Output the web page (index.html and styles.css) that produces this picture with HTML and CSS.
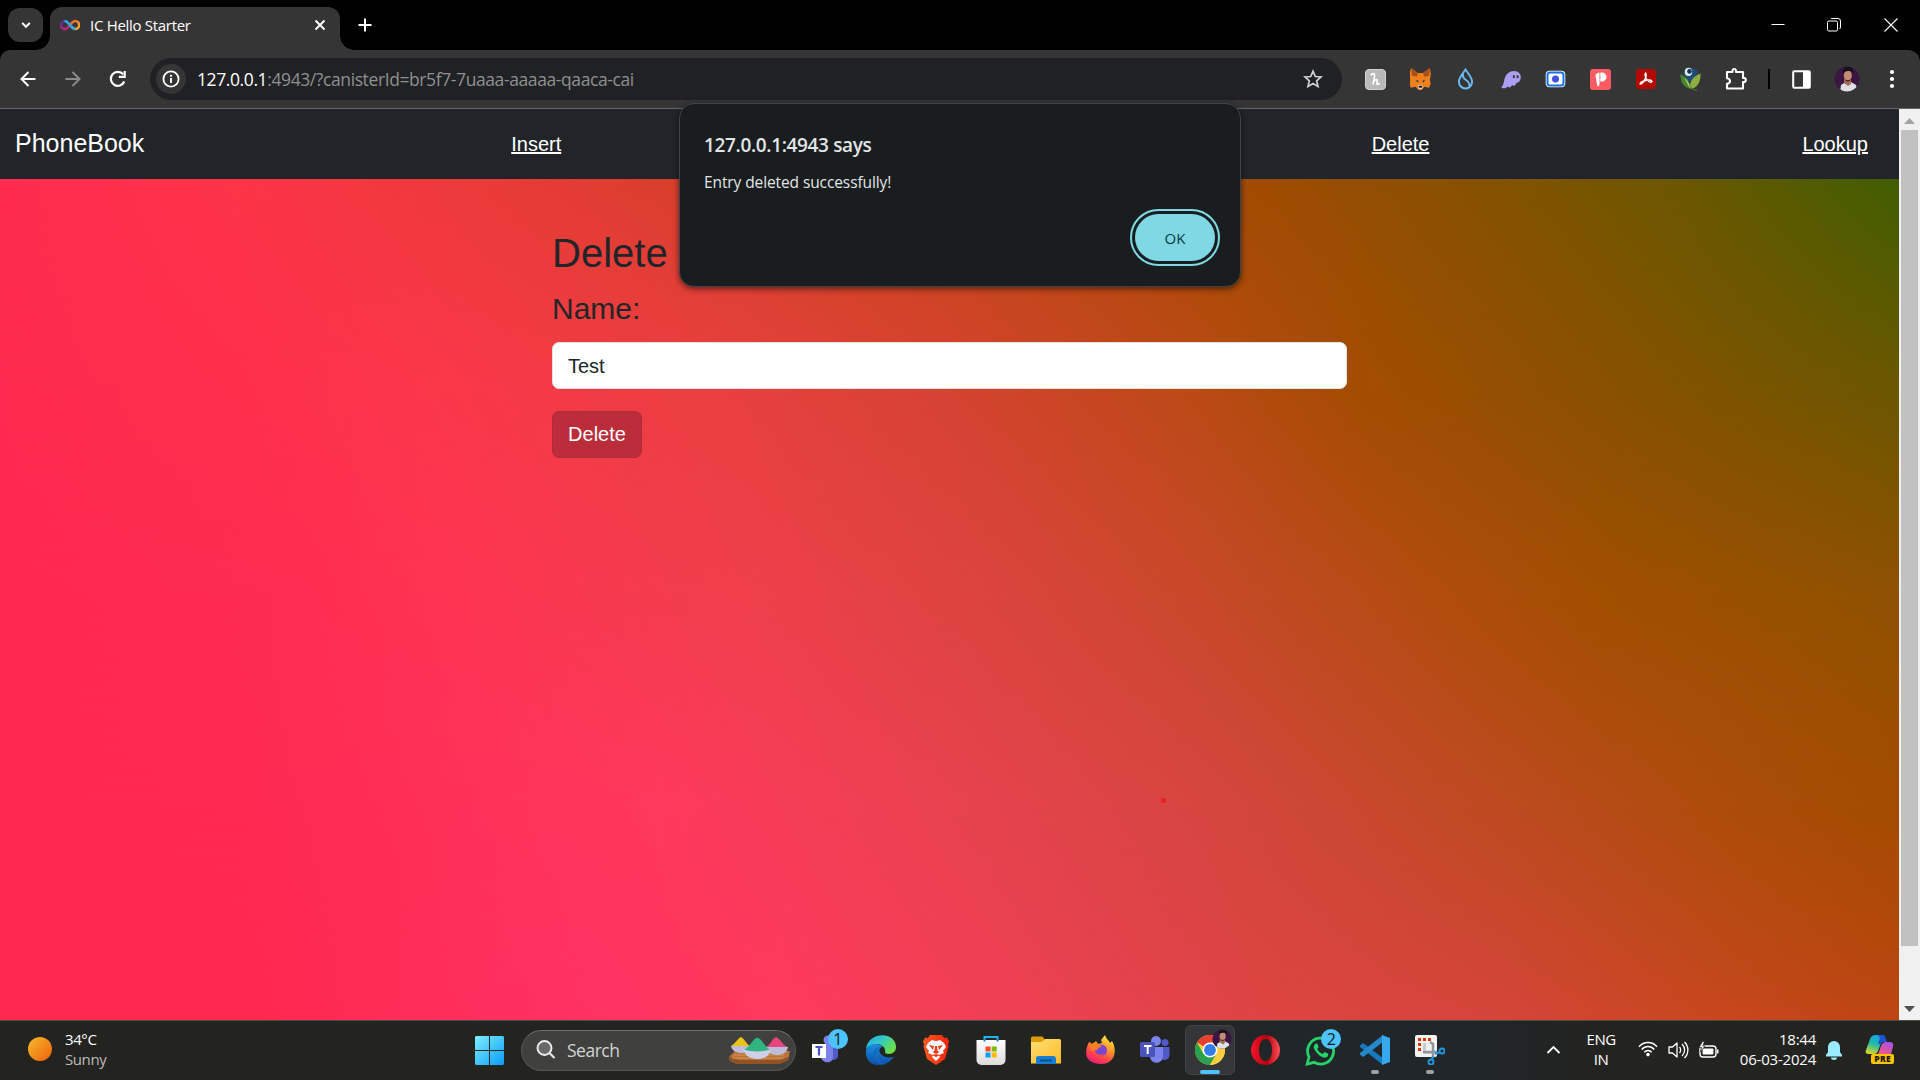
FILE: index.html
```html
<!DOCTYPE html>
<html lang="en">
<head>
<meta charset="utf-8">
<title>IC Hello Starter</title>
<link rel="stylesheet" href="styles.css">
</head>
<body>
<svg class="defs" width="0" height="0" aria-hidden="true">
  <defs>
    <linearGradient id="gWin" x1="0" y1="0" x2="1" y2="1"><stop offset="0" stop-color="#7defff"/><stop offset="1" stop-color="#0a9bf8"/></linearGradient>
    <linearGradient id="gSun" x1="0" y1="0" x2="1" y2="1"><stop offset="0" stop-color="#f5bb2c"/><stop offset="1" stop-color="#f0600c"/></linearGradient>
    <linearGradient id="gInfL" x1="0" y1="0" x2="1" y2="1"><stop offset="0" stop-color="#522785"/><stop offset=".35" stop-color="#8a2a90"/><stop offset="1" stop-color="#ed1e79"/></linearGradient>
    <linearGradient id="gInfR" x1="0" y1="0" x2="1" y2="1"><stop offset="0" stop-color="#f15a24"/><stop offset="1" stop-color="#fbb03b"/></linearGradient>
    <linearGradient id="gEdgeA" x1="0" y1="0" x2="1" y2=".5"><stop offset="0" stop-color="#2aa9e8"/><stop offset=".5" stop-color="#2fc7c8"/><stop offset="1" stop-color="#6be04e"/></linearGradient>
    <linearGradient id="gEdgeB" x1="0" y1="0" x2="0" y2="1"><stop offset="0" stop-color="#1a8fe0"/><stop offset="1" stop-color="#0a4fa8"/></linearGradient>
    <linearGradient id="gBrave" x1="0" y1="0" x2="1" y2="0"><stop offset="0" stop-color="#ff5a22"/><stop offset="1" stop-color="#f3230c"/></linearGradient>
    <linearGradient id="gFolder" x1="0" y1="0" x2="1" y2="1"><stop offset="0" stop-color="#ffdf70"/><stop offset="1" stop-color="#fdbb2a"/></linearGradient>
    <linearGradient id="gFox" x1=".8" y1="0" x2=".3" y2="1"><stop offset="0" stop-color="#fff04a"/><stop offset=".4" stop-color="#ff9a27"/><stop offset=".75" stop-color="#ff3f4c"/><stop offset="1" stop-color="#e81c76"/></linearGradient>
    <linearGradient id="gOpera" x1="0" y1="0" x2="1" y2="0"><stop offset="0" stop-color="#f5142a"/><stop offset=".55" stop-color="#b8000f"/><stop offset="1" stop-color="#ff5058"/></linearGradient>
    <linearGradient id="gCopA" x1=".6" y1="0" x2=".3" y2="1"><stop offset="0" stop-color="#1aa0e8"/><stop offset=".45" stop-color="#1bb9a8"/><stop offset="1" stop-color="#d8d62c"/></linearGradient>
    <linearGradient id="gCopB" x1=".8" y1="0" x2=".2" y2="1"><stop offset="0" stop-color="#a450e8"/><stop offset="1" stop-color="#ff5a78"/></linearGradient>
    <linearGradient id="gBag" x1="0" y1="0" x2="0" y2="1"><stop offset="0" stop-color="#ffffff"/><stop offset="1" stop-color="#dcdcdc"/></linearGradient>
    <clipPath id="cAvatar"><circle cx="13" cy="13" r="12.5"/></clipPath>
    <symbol id="avatar" viewBox="0 0 26 26">
      <g clip-path="url(#cAvatar)"><rect width="26" height="26" fill="#3b1544"/><path d="M6 26 7 19 11 16.500 17 16 22 19 24 26Z" fill="#dde0e4"/><path d="M10 13h7v5l-3 2-4-3Z" fill="#a56c55"/><ellipse cx="13.800" cy="9.500" rx="4" ry="5.500" fill="#c58c72"/><path d="M9 8C8 2 12 .5 15 1c4 0 5 4 4 7-1-3-3-3-5-3S10 6 9 8Z" fill="#15111a"/><path d="M10.300 12c1 3 6 3 7 0-.5 4-6 5-7 0Z" fill="#33201d"/></g>
    </symbol>
  </defs>
</svg>

<div class="screen">
  <header class="tabstrip">
    <button class="tab-search"><svg width="12" height="12" viewBox="0 0 12 12"><path d="M2.200 4 6 7.800 9.800 4" fill="none" stroke="#fff" stroke-width="2"/></svg></button>
    <div class="tab">
      <svg width="20" height="12" viewBox="0 0 20 12" fill="none" stroke-width="2.500"><path d="M10 6C8 3.600 6.800 2 4.900 2a4 4 0 0 0 0 8C6.800 10 8 8.400 10 6" stroke="url(#gInfL)"/><path d="M10 6c2-2.400 3.200-4 5.100-4a4 4 0 0 1 0 8C13.200 10 12 8.400 10 6Z" stroke="url(#gInfR)"/><path d="M4.500 2C6.800 2 8 3.600 10 6s3.200 4 5.500 4" stroke="#29abe2"/></svg>
      <span class="tab-title">IC Hello Starter</span>
      <svg class="tab-close" width="12" height="12" viewBox="0 0 12 12"><path d="m1.500 1.500 9 9m0-9-9 9" stroke="#fff" stroke-width="1.900"/></svg>
    </div>
    <svg class="new-tab" width="14" height="14" viewBox="0 0 14 14"><path d="M7 .5v13M.5 7h13" stroke="#fff" stroke-width="2"/></svg>
    <div class="window-controls">
      <span><svg width="14" height="14" viewBox="0 0 14 14"><path d="M.5 6.500h13" stroke="#fff"/></svg></span>
      <span><svg width="14" height="14" viewBox="0 0 14 14"><rect x=".5" y="3" width="10" height="10" rx="1.500" fill="none" stroke="#fff"/><path d="M3.500 1C4 .5 4 .5 5 .5h6A2.500 2.500 0 0 1 13.500 3v6c0 1-.5 1.500-1 2" fill="none" stroke="#fff"/></svg></span>
      <span><svg width="14" height="14" viewBox="0 0 14 14"><path d="m.5.5 13 13m0-13-13 13" stroke="#fff" stroke-width="1.100"/></svg></span>
    </div>
  </header>

  <div class="toolbar">
    <div class="nav-buttons">
      <span><svg width="16" height="16" viewBox="0 0 16 16"><path d="M15.500 8H2m6.500-7L1.500 8l7 7" fill="none" stroke="#fff" stroke-width="2"/></svg></span>
      <span><svg width="16" height="16" viewBox="0 0 16 16"><path d="M.5 8H14M7.500 1l7 7-7 7" fill="none" stroke="#8a8a8a" stroke-width="2"/></svg></span>
      <span><svg width="18" height="18" viewBox="0 0 18 18"><path d="M15.300 11.500A7 7 0 1 1 14.200 4.300" fill="none" stroke="#fff" stroke-width="2.200"/><path d="M16.800 1v7h-7V5.800h4.800V1Z" fill="#fff"/></svg></span>
    </div>
    <div class="omnibox">
      <span class="site-info"><svg width="18" height="18" viewBox="0 0 18 18"><circle cx="9" cy="9" r="7.600" fill="none" stroke="#fff" stroke-width="1.800"/><path d="M9 8v5M9 4.700v2" stroke="#fff" stroke-width="1.900"/></svg></span>
      <span class="url"><b>127.0.0.1</b>:4943/?canisterId=br5f7-7uaaa-aaaaa-qaaca-cai</span>
      <svg width="20" height="20" viewBox="0 0 20 20"><path d="m10 2.200 2.300 5.300 5.700.5-4.300 3.800 1.300 5.600-5-3-5 3 1.300-5.600L2 8l5.700-.5Z" fill="none" stroke="#d0d0d0" stroke-width="1.700"/></svg>
    </div>
    <div class="extensions">
      <span><svg width="21" height="25" viewBox="0 0 21 25"><rect x=".5" y=".5" width="20" height="20" rx="3.500" transform="translate(0 2)" fill="#b9b9b9" stroke="#d2d2d2"/><path d="M6 8.500c0-1.500 2.500-2.500 3.300-1.500.8 1.300-.6 6.500-1.300 10.500m.2-2c1.600-3.500 4.300-4 4-1.200-.3 2-.7 3.200.5 3.200.8 0 1.500-.8 1.800-1.500" fill="none" stroke="#fff" stroke-width="1.700"/></svg></span>
      <span><svg width="21" height="22" viewBox="0 0 22 20" preserveAspectRatio="none"><path d="M1 0 8.500 4.500h5L21 0l.8 6-1 5 .8 3-1.500 4-5-1-3 3h-3.200l-3-3-5 1-1.500-4 .8-3-1-5Z" fill="#f0801c"/><path d="m1 0 7.500 4.500L7 8l-5-1Zm20 0-7.500 4.500L15 8l5-1Z" fill="#a9501c"/><path d="m6 11 3 .5-.8 1.800Zm10 0-3 .5.800 1.800Z" fill="#2a3340"/><path d="m8.500 16 2.500-1 2.500 1-.7 3H9.200Z" fill="#d9cabd"/><path d="m9 16.500 2-.7 2 .7-.8 1.500H9.800Z" fill="#1b1b1b"/></svg></span>
      <span><svg width="17" height="24" viewBox="0 0 18 24"><path d="M9 2C6 6.500 2 10.500 2 15a7 7 0 0 0 14 0C16 10.500 12 6.500 9 2Z" fill="none" stroke="#6fbcf0" stroke-width="2"/><path d="M6.500 6.500C4 14 15 12 13 20" fill="none" stroke="#6fbcf0" stroke-width="2"/></svg></span>
      <span><svg width="22" height="19" viewBox="0 0 22 20"><path d="M.8 17.500C3 17 3 14 4 10 5.500 4 9.500 1 14 1c5 0 8 3.500 7.200 8-.6 3-3 5-4.700 4.600-.8 3.400-3.500 3.800-4.200 1.900-1.500 3.500-4 3.500-4.400 1.500C6 19.500 1.300 20 .8 17.500Z" fill="#ab9ff2"/><ellipse cx="14" cy="7" rx="1.100" ry="1.700" fill="#333"/><ellipse cx="18" cy="7" rx="1.100" ry="1.700" fill="#333"/></svg></span>
      <span><svg width="21" height="18" viewBox="0 0 21 18"><rect x=".7" y=".7" width="19.600" height="16.600" rx="4" fill="#fff"/><rect x="2.500" y="2.500" width="16" height="13" rx="2.500" fill="#fff" stroke="#1672e8" stroke-width="2"/><circle cx="10.500" cy="9" r="3.500" fill="#4350df"/></svg></span>
      <span><svg width="21" height="21" viewBox="0 0 21 21"><rect width="21" height="21" rx="3" fill="#ff5a63"/><path d="M5.500 7Q5.500 4 9.500 3.500V15Q9.500 17 7.500 17.500Z" fill="#fff"/><path d="M10.300 3.500h1.700a4.500 4.500 0 0 1 0 9H10.300Z" fill="#fff"/></svg></span>
      <span><svg width="20" height="20" viewBox="0 0 20 20"><rect width="20" height="20" rx="3.500" fill="#b30b00"/><path d="M9.500 4c1.500 1 .5 5-1.500 8s-4.500 4-3.800 2.300C5 12.500 10 11 13 11s3.800 1.800 2 2.200C12 13.500 8 7.500 9.500 4Z" fill="none" stroke="#fff" stroke-width="1.400"/></svg></span>
      <span><svg width="21" height="24" viewBox="0 0 21 22" preserveAspectRatio="none"><path d="M3 5C5-.5 15-1 18 5l-6 8H8Z" fill="#1f4d73"/><circle cx="8.500" cy="4.500" r="3.700" fill="#dceaf0"/><circle cx="9.500" cy="4" r="2.300" fill="#163650"/><path d="M10 20c-1-7 4-12 10.500-14 .5 7-3 14-10.500 14Z" fill="#8ead3f"/><path d="M11 20C4 19 .5 15 .5 6.500 6 9 10 13 11 20Z" fill="#49862e"/><path d="M10.500 20c-2-3-4-6-6-10 3 2 5 5 6 10Z" fill="#c2c970"/><path d="M11 19c2 2 4 2.500 6 2" fill="none" stroke="#42752d"/></svg></span>
      <span><svg width="24" height="24" viewBox="0 0 24 24"><path d="M3 5h5.500c-.8-4 4.300-4 3.500 0h7v6c3.800-.8 3.800 4.800 0 4v6.500H3v-4.700c4-.6 4-5 0-5.600Z" fill="none" stroke="#fff" stroke-width="2.100" stroke-linejoin="round"/></svg></span>
    </div>
    <i class="toolbar-divider"></i>
    <div class="profile-area">
      <span><svg width="19" height="19" viewBox="0 0 19 19"><rect x="1.200" y="1.200" width="16.600" height="16.600" rx="1" fill="none" stroke="#fff" stroke-width="2"/><path d="M11 1h7v17h-7Z" fill="#fff"/></svg></span>
      <span><svg width="26" height="26"><use href="#avatar"/></svg></span>
      <span><svg width="6" height="20" viewBox="0 0 6 20"><circle cx="3" cy="3" r="2.100" fill="#fff"/><circle cx="3" cy="10" r="2.100" fill="#fff"/><circle cx="3" cy="17" r="2.100" fill="#fff"/></svg></span>
    </div>
  </div>

  <main class="viewport">
    <div class="page">
      <div class="backdrop"><i class="band band-1"></i><i class="band band-2"></i><i class="band band-3"></i><i class="band band-4"></i><i class="band band-5"></i></div>
      <nav class="navbar">
        <a class="brand">PhoneBook</a>
        <a class="link">Insert</a>
        <a class="link">Update</a>
        <a class="link">Delete</a>
        <a class="link">Lookup</a>
      </nav>
      <form class="form">
        <h1>Delete</h1>
        <label>Name:</label>
        <div class="field">Test</div>
        <button type="button" class="submit">Delete</button>
      </form>
      <i class="pointer-dot"></i>
    </div>
    <aside class="scrollbar">
      <svg width="11" height="6" viewBox="0 0 11 6"><path d="M0 6h11L5.500 0Z" fill="#a3a3a3"/></svg>
      <i class="thumb"></i>
      <svg width="11" height="6" viewBox="0 0 11 6"><path d="M0 0h11L5.500 6Z" fill="#505050"/></svg>
    </aside>
  </main>

  <footer class="taskbar">
    <div class="weather">
      <svg width="24" height="24" viewBox="0 0 24 24"><circle cx="12" cy="12" r="12" fill="url(#gSun)"/></svg>
      <p><span>34°C</span><br><span class="muted">Sunny</span></p>
    </div>
    <div class="apps-start"><svg width="29" height="29" viewBox="0 0 29 29"><path d="M1 0h13v14H0V1Zm14 0h13l1 1v13H15ZM0 15h14v14H1l-1-1Zm15 0h14v13l-1 1H15Z" fill="url(#gWin)"/></svg></div>
    <div class="search">
      <svg width="20" height="20" viewBox="0 0 20 20"><circle cx="8.500" cy="8" r="7" fill="#68696a" stroke="#eee" stroke-width="1.900"/><path d="m13.500 13 5 5" stroke="#e4e4e4" stroke-width="2.200"/></svg>
      <span>Search</span>
      <svg class="bowls" width="63" height="29" viewBox="0 0 63 29"><path d="m7 15-6 6 1 4 7 3h42l9-4 2-9Z" fill="#b8743c"/><path d="m1 20 1 5 7 3h42l9-4 1-3-10 3H10Z" fill="#915225"/><path d="M6 19h50M4 22h52" stroke="#d5944f"/><path d="M3 10C8 7 10 2 13 1c4 2 5 7 9 9Z" fill="#e9c319"/><path d="M3 10h19c0 5-5 7-9 7S4 15 3 10Z" fill="#bdbdda"/><path d="M38 11c5-2 6-9 10-10 5 2 6 8 12 10Z" fill="#e8447e"/><path d="M38 11h22c-1 6-6 8-11 8s-11-3-11-8Z" fill="#bdbddb"/><path d="M15 13h28c-1 7-7 10-14 10s-13-4-14-10Z" fill="#cfcfe8"/><path d="M16 13.500c6-2 8-10 13-12 6 2 8 10 13 12-6 2.500-20 2.500-26 0Z" fill="#30b581"/></svg>
    </div>
    <div class="apps">
      <span class="app"><svg width="30" height="30" viewBox="0 0 30 30"><path d="M17 8h10v13a5 5 0 0 1-8 3Z" fill="#505ac9"/><circle cx="17" cy="5" r="4.500" fill="#7b83eb"/><path d="M10 9h12v13c0 7-11 7-12 0Z" fill="#7b83eb"/><rect x="1" y="9" width="14" height="14" fill="#fff"/><path d="M4.500 12h7M8 12v8.500" stroke="#4b53bc" stroke-width="2.200"/></svg><em class="badge">1</em></span>
      <span class="app"><svg width="30" height="30" viewBox="0 0 30 30"><path d="M0 14C2-4 30-4 30 12c0 7-7 8-11 6 2-9-11-13-19-4Z" fill="url(#gEdgeA)"/><path d="M0 15C2 8 13 7 17 12c-6-1-6 13 11 10C16 37-2 30 0 15Z" fill="url(#gEdgeB)"/><path d="M17 12c-9 0-9 16 3 17-10 2-17-11-9-16 2-1 4-1 6-1Z" fill="#1569bd"/></svg></span>
      <span class="app"><svg width="26" height="30" viewBox="0 0 26 30"><path d="M7 0h12l2 3 3-.5 2 4-1 3 .5 2L22 24l-9 6-9-6L.5 11.500l.500-2-1-3 2-4L5 3Z" fill="url(#gBrave)"/><path d="m9 5 4 1 4-1 4 3 2 4-3 4 1 2-5 2 1 2-4 4-4-4 1-2-5-2 1-2-3-4 2-4Z" fill="#fff"/><path d="m6 10 5 1-1 4Zm14 0-5 1 1 4ZM12 11h2l.5 5 2 1-3.500 2-3.500-2 2-1ZM9 20l4-1 4 1-4 2Z" fill="#f43d16"/></svg></span>
      <span class="app"><svg width="30" height="30" viewBox="0 0 30 30"><path d="M8.500 7V2h13v5" fill="none" stroke="#1eb5ef" stroke-width="2"/><path d="M.5 5h29v20a5 5 0 0 1-5 5h-19a5 5 0 0 1-5-5Z" fill="url(#gBag)"/><path d="M8.500 6.500V4m13 2.500V4" stroke="#1687bd" stroke-width="2"/><path d="M9.500 11.500h5v5h-5Z" fill="#f25022"/><path d="M15.700 11.500h5v5h-5Z" fill="#7fba00"/><path d="M9.500 17.500h5v5h-5Z" fill="#00a4ef"/><path d="M15.700 17.500h5v5h-5Z" fill="#ffb900"/></svg></span>
      <span class="app"><svg width="30" height="28" viewBox="0 0 30 28"><path d="M0 2q0-1.500 1.500-1.500h10L14 4v5H0Z" fill="#df9c09"/><path d="M0 6h11l3-3h14.500Q30 3 30 4.500V27.500H0Z" fill="url(#gFolder)"/><path d="M5 28v-5q0-3 3-3h14q3 0 3 3v5Z" fill="#177dcc"/><path d="M9 24.500h12" stroke="#0a4c87" stroke-width="1.800"/></svg></span>
      <span class="app"><svg width="30" height="30" viewBox="0 0 30 30"><path d="M3 7c1 0 2 1 2.500 2L9 7l1-1 2 3 4-1-1-3 4-5c1 4 4 5 5 8l2-2c5 8 4 23-11 23S-3 19 3 7Z" fill="url(#gFox)"/><circle cx="15" cy="15.500" r="6" fill="#7846d4"/><path d="M4 10c4-3 9-2 12 2-3 0-4 1-5 3l-6 1Z" fill="#ff7c27"/><path d="M9 16c2 5 7 4 10 2-3 6-10 4-10-2Z" fill="#ff4b3a"/></svg></span>
      <span class="app"><svg width="30" height="30" viewBox="0 0 30 30"><circle cx="16" cy="6" r="5" fill="#7b83eb"/><circle cx="25" cy="7.500" r="3.500" fill="#5059c9"/><path d="M20 12h9.500v8a5 5 0 0 1-8 4Z" fill="#5059c9"/><path d="M10 12h13v9c0 9-13 9-13 0Z" fill="#7b83eb"/><rect y="7" width="15" height="15" rx="1.500" fill="#4b53bc"/><path d="M4 11h7.500M7.700 11v8" stroke="#fff" stroke-width="2"/></svg></span>
      <span class="app active"><svg width="30" height="30" viewBox="0 0 30 30"><circle cx="15" cy="15" r="15" fill="#ffcd40"/><path d="M15 15 2 7.500A15 15 0 0 1 28 7.500H15Z" fill="#e64234"/><path d="M2 7.500 8.500 19 15 22.500 15 30A15 15 0 0 1 2 7.500Z" fill="#2aa14d"/><path d="M8.500 19 15 15l6.500 3.800L15 30H13Z" fill="#2aa14d"/><path d="M28 7.500H15l6.500 11.300L15 30A15 15 0 0 0 28 7.500Z" fill="#ffcd40"/><circle cx="15" cy="15" r="7.500" fill="#fff"/><circle cx="15" cy="15" r="5.900" fill="#347de8"/></svg><svg class="app-avatar" width="20" height="20"><use href="#avatar"/></svg></span>
      <span class="app"><svg width="29" height="30" viewBox="0 0 29 30"><path d="M14.500 0a14.500 15 0 1 0 0 30 14.500 15 0 1 0 0-30Zm0 4c4 0 6.500 4.500 6.500 11s-2.500 11-6.500 11S8 21.500 8 15s2.500-11 6.500-11Z" fill="url(#gOpera)" fill-rule="evenodd"/></svg></span>
      <span class="app"><svg width="31" height="31" viewBox="0 0 31 31"><path d="M2.200 29 4 22A13 13 0 1 1 9 27.300Z" fill="none" stroke="#25d366" stroke-width="2.800"/><path d="M11 8.500c-2 1-3 3-1.500 6 2.500 4.500 5.500 7 9 8 3 .8 5.500-1.500 4.500-4l-3.500-1.600-1.700 2c-2.800-1-4.500-3-5.600-5l1.500-2-1.500-3.400Z" fill="#25d366"/></svg><em class="badge">2</em></span>
      <span class="app running"><svg width="30" height="30" viewBox="0 0 30 30"><path d="m0 10.500 3-2.500 20 15v7L0 12Z" fill="#1679bd"/><path d="M0 19.500 3 22 23 7V0L0 18Z" fill="#2489ca"/><path d="m22 0 8 3v24l-8 3Z" fill="#35a9ee"/></svg></span>
      <span class="app running"><svg width="31" height="30" viewBox="0 0 31 30"><rect x="1" width="22" height="22" rx="2" fill="#f3f3f3"/><path d="M4 3h3v3H4Zm5 0h3v3H9Zm5 0h3v3h-3ZM4 8h3v3H4Zm0 5h3v3H4Z" fill="#d83b01"/><path d="M9 8h3v8h7v3H9Z" fill="#c9cdd2"/><path d="m16 7 3 2v14M9 17h14" fill="none" stroke="#8e969e" stroke-width="2.500"/><circle cx="17" cy="27" r="2.500" fill="none" stroke="#2096dc" stroke-width="2"/><circle cx="28" cy="16" r="2.500" fill="none" stroke="#2096dc" stroke-width="2"/><path d="m18 25 1-4m2-2 5-2" stroke="#2096dc" stroke-width="2"/></svg></span>
    </div>
    <div class="tray">
      <svg class="tray-chevron" width="15" height="10" viewBox="0 0 15 10"><path d="m1.500 8 6-6 6 6" fill="none" stroke="#fff" stroke-width="1.800"/></svg>
      <p class="language">ENG<br>IN</p>
      <div class="status">
        <svg width="20" height="16" viewBox="0 0 20 16"><g fill="none" stroke="#fff" stroke-width="1.500"><path d="M1 5.700c5-5.500 13-5.500 18 0"/><path d="M3.700 8.500c3.500-4 9.100-4 12.600 0"/><path d="M6.300 11.300c2-2.400 5.400-2.400 7.400 0"/></g><circle cx="10" cy="13.600" r="1.800" fill="#fff"/></svg>
        <svg width="21" height="18" viewBox="0 0 21 18"><path d="M1 6h3.500L9 2v14l-4.500-4H1Z" fill="none" stroke="#fff" stroke-width="1.300" stroke-linejoin="round"/><path d="M11.500 6c1.500 1.500 1.500 4.500 0 6m2.500-9c3.500 3.500 3.500 8.500 0 12m2.500-14c4.500 4.500 4.500 11.500 0 16" fill="none" stroke="#fff" stroke-width="1.300"/></svg>
        <svg width="21" height="18" viewBox="0 0 21 18"><rect x="2" y="5" width="16" height="11" rx="3" fill="none" stroke="#fff" stroke-width="1.400"/><rect x="4.500" y="7.500" width="11" height="6" rx="1" fill="#fff"/><path d="M19 8.500h1.500v4H19" fill="#fff"/><path d="M4.500.500 1 6.500h2.500L2.500 11 7 5H4.800L6.500.500Z" fill="#fff" stroke="#22221f" stroke-width=".7"/></svg>
      </div>
      <p class="clock">18:44<br>06-03-2024</p>
      <svg class="bell" width="16" height="19" viewBox="0 0 16 19"><path d="M8 0a6 6 0 0 0-6 6v5L0 14v1.500h16V14l-2-3V6A6 6 0 0 0 8 0ZM5 16.500a3 2.500 0 0 0 6 0Z" fill="#99ebff"/></svg>
      <div class="copilot"><svg width="29" height="22" viewBox="0 0 29 22"><path d="M5 4Q6.500 0 10.500 0H19L13 16q-1 3-4 3H3.500Q0 19 .8 15.500Z" fill="url(#gCopA)"/><path d="M13 0h4q3 0 4 4l1 3h-4q-2 0-3 2.500L13 8l2-5Z" fill="#2050d4"/><path d="M16 11q1.500-4 5-4h4q4 0 3 4.500L25.500 21H12.500Z" fill="url(#gCopB)"/></svg><em>PRE</em></div>
    </div>
  </footer>

  <section class="dialog">
    <h2>127.0.0.1:4943 says</h2>
    <p>Entry deleted successfully!</p>
    <button type="button">OK</button>
  </section>
</div>
</body>
</html>
```
FILE: styles.css
```css
* { box-sizing: border-box; }
body { margin: 0; background: #000; overflow: hidden; }
svg { display: block; flex: none; }
p, h1, h2 { margin: 0; font-weight: 400; }
em { font-style: normal; }
.defs { position: absolute; }

.screen {
  position: relative;
  width: 1920px;
  height: 1080px;
  display: flex;
  flex-direction: column;
  font-family: "Open Sans", "Noto Sans", sans-serif;
  color: #fff;
}

/* Tab strip */
.tabstrip { height: 50px; display: flex; align-items: center; background: #000; padding-left: 8px; }
.tab-search { width: 35px; height: 34px; border: 0; border-radius: 12px; background: #353535; display: grid; place-items: center; padding: 0; }
.tab {
  position: relative;
  width: 290px;
  height: 43px;
  margin: 7px 0 0 7px;
  padding: 0 14px 7px 10px;
  display: flex;
  align-items: center;
  background: #353535;
  border-radius: 12px 12px 0 0;
}
.tab::before, .tab::after { content: ""; position: absolute; bottom: 0; width: 14px; height: 14px; }
.tab::before { left: -14px; background: radial-gradient(circle at 0 0, transparent 13.5px, #353535 14px); }
.tab::after { right: -14px; background: radial-gradient(circle at 100% 0, transparent 13.5px, #353535 14px); }
.tab-title { margin-left: 10px; font-size: 15px; letter-spacing: -0.3px; white-space: nowrap; }
.tab-close { margin-left: auto; }
.new-tab { margin-left: 18px; }
.window-controls { margin-left: auto; display: flex; padding-right: 1px; }
.window-controls span { width: 56.5px; display: grid; place-items: center; }

/* Toolbar */
.toolbar { height: 59px; display: flex; align-items: center; background: #353535; border-bottom: 1px solid #666; border-radius: 10px 12px 0 0; padding-left: 5px; }
.nav-buttons, .extensions, .profile-area { display: flex; }
.nav-buttons span, .extensions span, .profile-area span { width: 45px; display: grid; place-items: center; }
.omnibox { width: 1192px; height: 42px; margin-left: 10px; padding: 0 19px 0 6px; border-radius: 21px; background: #202124; display: flex; align-items: center; }
.site-info { width: 30px; height: 30px; border-radius: 50%; background: #353535; display: grid; place-items: center; }
.url { flex: 1; margin-left: 11px; font-size: 17.5px; letter-spacing: -0.4px; color: #8f9091; white-space: nowrap; }
.url b { font-weight: 400; color: #fff; }
.extensions { margin-left: 11px; }
.toolbar-divider { width: 2px; height: 20px; background: #000; margin: 0 9px 0 10px; }

/* Page */
.viewport { height: 911px; display: flex; }
.page { position: relative; flex: 1; font-family: "Liberation Sans", Arial, sans-serif; color: #212529; }
.backdrop { position: absolute; inset: 70px 0 0; overflow: hidden; }
.band { position: absolute; inset: 0; }
.band-1 { background: linear-gradient(90deg, #ff2b4f 0, #fd3448 240px, #ee3a3c 430px, #dc3e2e 640px, #c54617 950px, #a04c00 1260px, #8a5100 1440px, #6b5800 1680px, #405f00 1899px); }
.band-2 { background: linear-gradient(90deg, #ff2a50 0, #ff2f4c 240px, #fb374a 430px, #e94040 720px, #d44330 960px, #bb4a14 1200px, #a24d00 1370px, #855200 1640px, #6b5700 1899px); -webkit-mask: linear-gradient(transparent 0, #000 210px); mask: linear-gradient(transparent 0, #000 210px); }
.band-3 { background: linear-gradient(90deg, #ff2850 0, #ff2b52 260px, #ff3453 450px, #ee404b 760px, #dc443f 980px, #c74929 1210px, #b04d0c 1450px, #a14f00 1610px, #8f5200 1899px); -webkit-mask: linear-gradient(transparent 210px, #000 420px); mask: linear-gradient(transparent 210px, #000 420px); }
.band-4 { background: linear-gradient(90deg, #ff2850 0, #ff2952 240px, #ff315b 470px, #ff395e 660px, #ea4250 930px, #d54640 1210px, #c14a24 1460px, #ab4d08 1750px, #a34c00 1899px); -webkit-mask: linear-gradient(transparent 420px, #000 630px); mask: linear-gradient(transparent 420px, #000 630px); }
.band-5 { background: linear-gradient(90deg, #ff2850 0, #ff2850 260px, #ff3162 560px, #ff395e 780px, #ed4054 1010px, #dd4443 1260px, #d4453a 1500px, #c8471f 1700px, #bd4512 1899px); -webkit-mask: linear-gradient(transparent 630px, #000 841px); mask: linear-gradient(transparent 630px, #000 841px); }

.navbar { position: relative; height: 70px; padding: 0 31px 0 15px; display: flex; align-items: center; justify-content: space-between; background: #212529; color: #fff; }
.brand { margin-right: -6px; padding-bottom: 1px; font-size: 25px; }
.link { font-size: 20px; text-decoration: underline; }
.form { position: relative; width: 795px; margin: 0 auto; padding-top: 50px; display: flex; flex-direction: column; align-items: flex-start; }
.form h1 { font-size: 40px; line-height: 48px; margin-bottom: 14px; }
.form label { font-size: 30px; line-height: 36px; margin-bottom: 15px; }
.field { width: 100%; height: 47px; padding: 0 15px; border: 1px solid #dee2e6; border-radius: 7px; background: #fff; font-size: 20px; line-height: 46px; }
.submit { margin-top: 22px; width: 90px; height: 47px; border: 1px solid #b02a37; border-radius: 7px; background: #bb2d3b; color: #fff; font: 20px "Liberation Sans", Arial, sans-serif; padding: 0; }
.pointer-dot { position: absolute; left: 1161px; top: 689px; width: 5px; height: 5px; border-radius: 50%; background: #ee1c24; }

.scrollbar { width: 21px; display: flex; flex-direction: column; align-items: center; background: #f1f1f1; padding: 9px 0 8px; }
.thumb { width: 17px; height: 816px; margin: 6px 0 auto; background: #c1c1c1; }

/* Dialog */
.dialog {
  position: absolute;
  left: 679px;
  top: 103px;
  width: 562px;
  height: 184px;
  padding: 27px 24px 0;
  display: flex;
  flex-direction: column;
  border: 1px solid #3f4446;
  border-radius: 15px;
  background: #191d1f;
  box-shadow: 0 2px 6px rgba(0, 0, 0, .55);
  color: #e1e5e6;
}
.dialog h2 { font-size: 19px; line-height: 28px; font-weight: 600; letter-spacing: -0.350px; }
.dialog p { margin-top: 11px; font-size: 15.5px; line-height: 24px; letter-spacing: -0.1px; }
.dialog button { align-self: flex-end; width: 80px; height: 47px; margin: 20px 1px 0 0; border: 0; border-radius: 24px; outline: 2px solid #7fd8e4; outline-offset: 3px; background: #7fd8e4; color: #083b43; font: 500 15px "Open Sans", sans-serif; }

/* Taskbar */
.taskbar { height: 60px; display: flex; align-items: center; background: linear-gradient(90deg, #23231f 0, #23231f 58%, #20262a 68%, #20262a 76%, #23231f 84%); border-top: 1px solid #4a4a46; padding-bottom: 1px; font-size: 15px; line-height: 20px; }
.taskbar p { position: relative; top: -1px; }
.weather { width: 461px; padding-left: 28px; display: flex; align-items: center; gap: 13px; letter-spacing: -0.4px; }
.weather svg { margin-top: -2px; }
.muted { color: #bdbdbb; }
.apps-start { width: 60px; padding-left: 14px; }
.search { width: 275px; height: 41px; padding: 0 4px 0 14px; display: flex; align-items: center; border-radius: 21px; border: 1px solid #555553; border-top-color: #6e6e6b; background: #40403e; font-size: 17.5px; color: #d4d4d2; letter-spacing: -0.5px; }
.search span { margin-left: 11px; }
.bowls { margin-left: auto; }
.apps { display: flex; margin-left: 3px; }
.app { position: relative; width: 54.85px; height: 50px; display: grid; place-items: center; }
.badge { position: absolute; right: 6px; top: 4px; width: 20px; height: 20px; border-radius: 50%; background: #4cc2ff; color: #101820; text-align: center; font-size: 16px; line-height: 20px; }
.active::before { content: ""; position: absolute; z-index: -1; inset: 0 2.4px; border: 1px solid #414344; border-radius: 6px; background: #343638; }
.active { z-index: 0; }
.app-avatar { position: absolute; right: 6px; top: 4px; }
.active::after, .running::after { content: ""; position: absolute; left: 50%; bottom: 1px; height: 4px; border-radius: 2px; transform: translateX(-50%); }
.active::after { width: 20px; background: #4cc2ff; }
.running::after { width: 8px; background: #a0a0a0; }
.tray { flex: 1; display: flex; align-items: center; padding-left: 89px; letter-spacing: -0.45px; }
.language { width: 30px; margin-left: 25px; text-align: center; }
.status { display: flex; gap: 9.5px; margin-left: 22px; }
.clock { width: 90px; margin-left: 7px; text-align: right; white-space: nowrap; letter-spacing: -0.2px; }
.bell { margin-left: 10px; }
.copilot { position: relative; margin: -3px 0 0 23px; width: 30px; height: 28px; padding-top: 0; }
.copilot em { position: absolute; left: 6px; top: 19px; width: 23px; height: 10px; border-radius: 2px; background: #ffc400; color: #1b1a10; font-size: 8.5px; font-weight: 800; line-height: 10px; letter-spacing: 0.3px; text-align: center; }
```
